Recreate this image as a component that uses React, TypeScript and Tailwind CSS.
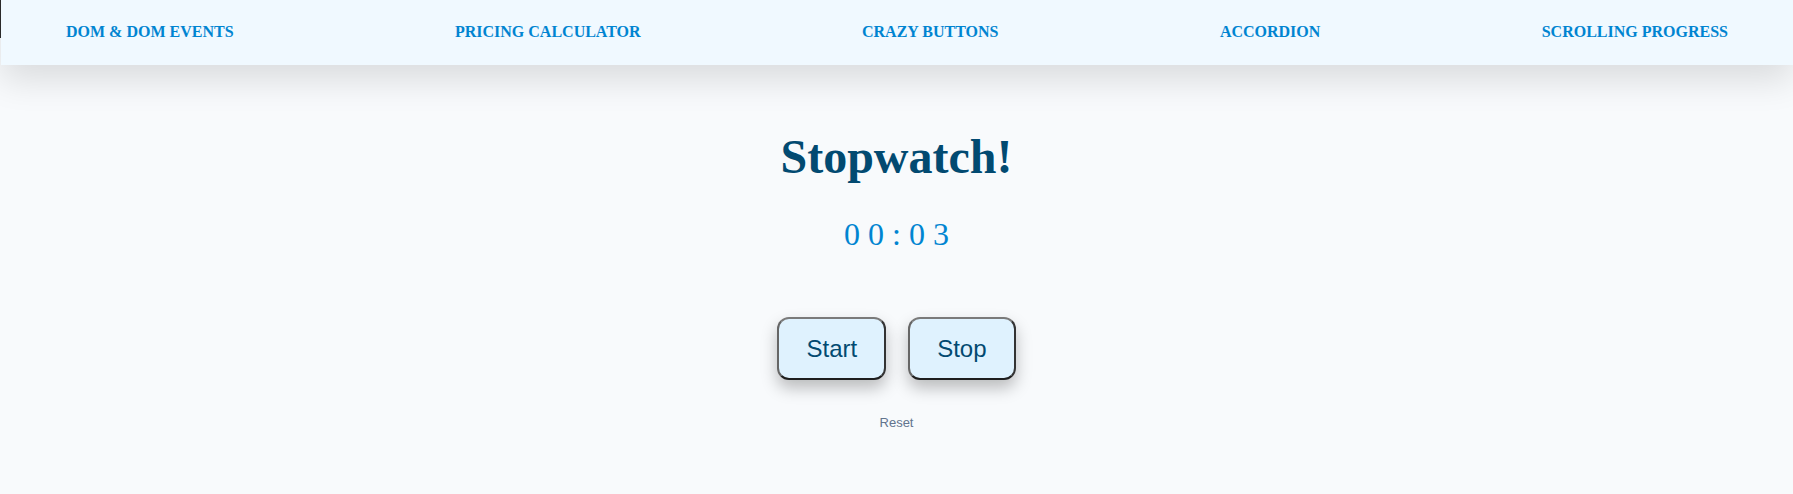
import React from "react";

const links = [
  "DOM & DOM Events",
  "Pricing Calculator",
  "Crazy Buttons",
  "Accordion",
  "Scrolling Progress",
];

export default function App() {
  const [seconds, setSeconds] = React.useState(3);
  const [running, setRunning] = React.useState(false);

  React.useEffect(() => {
    if (!running) return;
    const id = setInterval(() => setSeconds((s) => s + 1), 1000);
    return () => clearInterval(id);
  }, [running]);

  const mm = String(Math.floor(seconds / 60) % 100).padStart(2, "0");
  const ss = String(seconds % 60).padStart(2, "0");
  const display = `${mm}:${ss}`.split("").join(" ");

  return (
    <div className="relative min-h-screen bg-slate-50 font-['Liberation_Serif',serif]">
      <div className="absolute left-0 top-0 z-20 h-[38px] w-px bg-[#2a2a2a]"></div>
      <nav className="relative z-10 ml-px flex h-[65px] items-center justify-between bg-sky-50 px-[65px] pb-[2px] shadow-[0_15px_35px_rgba(0,0,0,0.12)]">
        {links.map((l) => (
          <a
            key={l}
            href="#"
            className="text-base font-bold uppercase leading-none text-sky-600"
          >
            {l}
          </a>
        ))}
      </nav>

      <main className="flex flex-col items-center">
        <h1 className="mt-[68px] text-5xl font-bold leading-none text-sky-900">
          Stopwatch!
        </h1>
        <p className="mt-[37px] whitespace-pre text-[32px] leading-none text-sky-600">
          {display}
        </p>
        <div className="mt-[67px] flex gap-[22px] font-['Liberation_Sans',sans-serif]">
          <button
            onClick={() => setRunning(true)}
            className="rounded-xl border-2 border-t-[#7a7a7a] border-l-[#666] border-r-[#333] border-b-[#1e1e1e] bg-sky-100 px-[27px] py-4 text-2xl leading-[27px] text-sky-900 shadow-[0_8px_16px_rgba(0,0,0,0.25)]"
          >
            Start
          </button>
          <button
            onClick={() => setRunning(false)}
            className="rounded-xl border-2 border-t-[#7a7a7a] border-l-[#666] border-r-[#333] border-b-[#1e1e1e] bg-sky-100 px-[27px] py-4 text-2xl leading-[27px] text-sky-900 shadow-[0_8px_16px_rgba(0,0,0,0.25)]"
          >
            Stop
          </button>
        </div>
        <button
          onClick={() => {
            setRunning(false);
            setSeconds(0);
          }}
          className="mt-[36px] font-['Liberation_Sans',sans-serif] text-[13px] leading-none text-slate-500"
        >
          Reset
        </button>
      </main>
    </div>
  );
}
